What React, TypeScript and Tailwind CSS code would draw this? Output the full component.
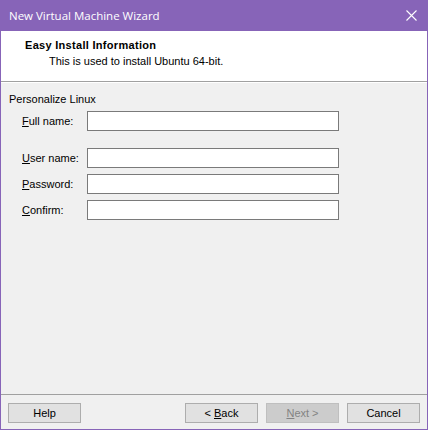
import React from "react";

export default function App() {
  const fields = [
    { key: "F", rest: "ull name:", gap: "mt-[5px]" },
    { key: "U", rest: "ser name:", gap: "mt-[17px]" },
    { key: "P", rest: "assword:", gap: "mt-[6px]" },
    { key: "C", rest: "onfirm:", gap: "mt-[6px]" },
  ];

  return (
    <div
      className="w-[428px] h-[430px] flex flex-col bg-[#f0f0f0] border-x border-b border-[#8764b8] text-black"
      style={{ fontFamily: "Tahoma, 'Liberation Sans', Arial, sans-serif" }}
    >
      <div
        className="h-[31px] shrink-0 bg-[#8764b8] flex items-center justify-between pl-[8px] pr-[10px] text-white text-[11.5px]"
        style={{ fontFamily: "'Open Sans', 'Liberation Sans', sans-serif" }}
      >
        <span>New Virtual Machine Wizard</span>
        <svg width="11" height="11" viewBox="0 0 11 11" className="stroke-white">
          <path d="M0.5 0.5L10.5 10.5M10.5 0.5L0.5 10.5" strokeWidth="1.1" />
        </svg>
      </div>

      <div className="h-[51px] shrink-0 bg-white border-b border-[#a0a0a0] pt-[7px] text-[11px]">
        <div className="pl-[24px] font-bold leading-[14px] tracking-[0.3px]">Easy Install Information</div>
        <div className="pl-[48px] mt-[2px] leading-[14px]">This is used to install Ubuntu 64-bit.</div>
      </div>
      <div className="h-px shrink-0 bg-white" />

      <div className="flex-1 pl-[8px] pt-[10px] text-[11px]">
        <div className="leading-[13px]">Personalize Linux</div>
        {fields.map((f) => (
          <div key={f.key} className={`flex items-center ${f.gap}`}>
            <span className="w-[78px] pl-[13px]">
              <span className="underline">{f.key}</span>
              {f.rest}
            </span>
            <div className="w-[252px] h-[20px] bg-white border border-[#7a7a7a]" />
          </div>
        ))}
      </div>

      <div className="h-[35px] shrink-0 border-t border-[#a0a0a0] flex items-start pt-[8px] px-[7px] text-[11px]">
        <button className="w-[73px] h-[20px] bg-[#e1e1e1] border border-[#adadad]">Help</button>
        <div className="ml-auto flex gap-[8px]">
          <button className="w-[73px] h-[20px] bg-[#e1e1e1] border border-[#adadad]">
            &lt; <span className="underline">B</span>ack
          </button>
          <button className="w-[73px] h-[20px] bg-[#cccccc] border border-[#bfbfbf] text-[#838383]">
            <span className="underline">N</span>ext &gt;
          </button>
          <button className="w-[73px] h-[20px] bg-[#e1e1e1] border border-[#adadad]">Cancel</button>
        </div>
      </div>
    </div>
  );
}
